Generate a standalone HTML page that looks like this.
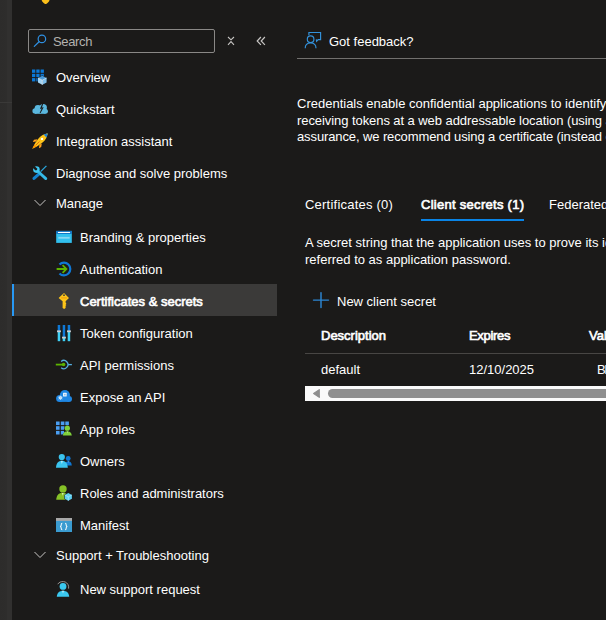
<!DOCTYPE html>
<html><head><meta charset="utf-8">
<style>
html,body{margin:0;padding:0;}
body{width:606px;height:620px;overflow:hidden;position:relative;background:#1b1a19;font-family:"Liberation Sans",sans-serif;font-size:13px;color:#ffffff;}
.a{position:absolute;}
.t{position:absolute;white-space:nowrap;line-height:16px;height:16px;}
.sb{-webkit-text-stroke:0.65px #ffffff;}
.strip{left:0;top:0;width:12px;height:620px;background:linear-gradient(to right,#2d2c2b 0px,#2e2d2c 7px,#31302f 7px,#31302f 12px);}
.sel{left:12px;top:284px;width:265px;height:32px;background:#3b3a39;}
.selb{left:12px;top:284px;width:2px;height:32px;background:#2899f5;}
svg{position:absolute;overflow:visible;}
</style></head><body>
<div class="a strip"></div>
<div class="a" style="left:0;top:102px;width:12px;height:1px;background:#3a3938"></div>

<!-- header key bottom -->
<svg style="left:0;top:0" width="606" height="620" viewBox="0 0 606 620"><path d="M41.8 -3 H49.4 V0.5 C49.4 1.5 46.5 4 45.6 4.1 C44.7 4 41.8 1.5 41.8 0.5 Z" fill="#fbbf1a"/></svg>
<!-- search box -->
<div class="a" style="left:28px;top:29px;width:185px;height:22px;border:1px solid #8a8886;border-radius:2px;"></div>
<svg style="left:0;top:0" width="606" height="620" viewBox="0 0 606 620"><circle cx="41.9" cy="38.9" r="3.75" fill="none" stroke="#2f90e2" stroke-width="1.2"/><line x1="39.1" y1="41.7" x2="34.3" y2="46.4" stroke="#2f90e2" stroke-width="1.25" stroke-linecap="round"/></svg>
<div class="t" style="left:53px;top:34px;color:#b4b2af;letter-spacing:-0.35px">Search</div>
<!-- collapse icon -->
<svg style="left:0;top:0" width="606" height="620" viewBox="0 0 606 620">
<path d="M228 37 L231 39.8 L234 37 M228 44.8 L231 41.6 L234 44.8" fill="none" stroke="#c8c6c4" stroke-width="1.1"/>
<path d="M260.9 37 L257.2 41 L260.9 44.9 M264.9 37 L261.2 41 L264.9 44.9" fill="none" stroke="#c8c6c4" stroke-width="1.2"/>
</svg>
<!-- selected -->
<div class="a sel"></div>
<div class="a selb"></div>

<!-- nav items -->
<div class="t" style="left:56px;top:70px">Overview</div>
<div class="t" style="left:56px;top:102px">Quickstart</div>
<div class="t" style="left:56px;top:134px">Integration assistant</div>
<div class="t" style="left:56px;top:166px">Diagnose and solve problems</div>
<div class="t" style="left:56px;top:196px">Manage</div>
<div class="t" style="left:80px;top:230px">Branding &amp; properties</div>
<div class="t" style="left:80px;top:262px">Authentication</div>
<div class="t sb" style="left:80px;top:294px">Certificates &amp; secrets</div>
<div class="t" style="left:80px;top:326px">Token configuration</div>
<div class="t" style="left:80px;top:358px">API permissions</div>
<div class="t" style="left:80px;top:390px">Expose an API</div>
<div class="t" style="left:80px;top:422px">App roles</div>
<div class="t" style="left:80px;top:454px">Owners</div>
<div class="t" style="left:80px;top:486px">Roles and administrators</div>
<div class="t" style="left:80px;top:518px">Manifest</div>
<div class="t" style="left:56px;top:548px">Support + Troubleshooting</div>
<div class="t" style="left:80px;top:582px">New support request</div>


<!-- Overview -->
<svg style="left:31px;top:69px" width="16" height="16" viewBox="0 0 16 16">
<g fill="#0a78d7"><rect x="1" y="0.5" width="3.3" height="3.3"/><rect x="5.3" y="0.5" width="3.3" height="3.3"/><rect x="9.6" y="0.5" width="3.3" height="3.3"/>
<rect x="1" y="4.8" width="3.3" height="3.3"/><rect x="5.3" y="4.8" width="3.3" height="3.3"/><rect x="9.6" y="4.8" width="3.3" height="3.3"/>
<rect x="1" y="9.1" width="3.3" height="3.3"/><rect x="5.3" y="9.1" width="3.3" height="3.3"/></g>
<path d="M11.3 6.8 L15.6 9 L15.6 13.6 L11.3 15.8 L7 13.6 L7 9 Z" fill="#1b1a19" stroke="#1b1a19" stroke-width="0.8"/>
<path d="M11.3 6.8 L15.6 9 L11.3 11.2 L7 9 Z" fill="#4a9ad8"/>
<path d="M7 9 L11.3 11.2 L11.3 15.8 L7 13.6 Z" fill="#9fd2f3"/>
<path d="M15.6 9 L11.3 11.2 L11.3 15.8 L15.6 13.6 Z" fill="#7cbdea"/>
<path d="M7 9 L11.3 11.2 L15.6 9 M11.3 11.2 V15.8" fill="none" stroke="#e8f4fc" stroke-width="0.7"/>
</svg>
<!-- Quickstart cloud -->
<svg style="left:32px;top:101px" width="16" height="16" viewBox="0 0 16 16">
<g fill="#5ab7de"><circle cx="3.2" cy="10" r="2.8"/><circle cx="6" cy="7.3" r="3.4"/><circle cx="11.2" cy="6.6" r="3.7"/><circle cx="13.4" cy="10.3" r="2.5"/><rect x="3" y="8" width="10.5" height="4.8"/></g>
<path d="M10.6 1.8 L7.9 7.9 L9.7 7.6 L7.6 12 L8.6 12 L11.7 6.3 L9.9 6.6 L11.6 1.8 Z" fill="#1b1a19"/>
</svg>
<!-- Rocket -->
<svg style="left:32px;top:133px" width="16" height="16" viewBox="0 0 16 16">
<path d="M5.5 6.2 L2 6.8 L0.8 9 L4.2 8.6 Z" fill="#ff9f1c"/>
<path d="M9.8 10.5 L9.2 14 L7 15.2 L7.4 11.8 Z" fill="#ff9f1c"/>
<path d="M15.6 0.4 C12 0.8 9 2.5 6.5 5.5 L3.2 10 L2.6 11.2 L0.3 15.7 L4.8 13.4 L6 12.8 L10.5 9.5 C13.5 7 15.2 4 15.6 0.4 Z" fill="#fcc419"/>
<path d="M0.3 15.7 L2.6 11.2 L4.8 13.4 Z" fill="#ff9500"/>
<path d="M4 12 L7.5 8.5" stroke="#e86a10" stroke-width="1"/>
<path d="M15.6 0.4 C14 0.6 12.8 1 11.6 1.6 L14.4 4.4 C15 3.2 15.4 2 15.6 0.4 Z" fill="#1a7fd8"/>
<path d="M15.6 0.4 L14.3 0.8 L15.2 1.7 Z" fill="#9bc48f"/>
<circle cx="10" cy="5.9" r="1.2" fill="#ffffff"/>
</svg>
<!-- Wrench -->
<svg style="left:32px;top:165px" width="16" height="16" viewBox="0 0 16 16">
<path d="M14.4 0.9 L8.6 6.6" stroke="#2aa6dc" stroke-width="1.3"/>
<path d="M7.4 8.6 L2 13.4" stroke="#1382cf" stroke-width="3.1" stroke-linecap="round"/>
<path d="M5.5 6 L13.8 13.6" stroke="#35b9e6" stroke-width="2.8" stroke-linecap="round"/>
<circle cx="4.4" cy="4.6" r="3.3" fill="#3ec8f2"/>
<path d="M1.2 1.4 L3.9 4.1" stroke="#1b1a19" stroke-width="2.6" stroke-linecap="round"/>
</svg>
<!-- Branding -->
<svg style="left:56px;top:230px" width="16" height="14" viewBox="0 0 16 14">
<rect x="0.2" y="0.9" width="15.6" height="12" fill="#32c0ee"/>
<rect x="0.2" y="0.9" width="15.6" height="3" fill="#0f6fc0"/>
<rect x="1.9" y="1.9" width="12.2" height="1.1" fill="#ffffff"/>
<rect x="2.3" y="6.9" width="11.4" height="1.8" fill="#86d8f3"/>
</svg>
<!-- Authentication -->
<svg style="left:56px;top:261px" width="16" height="16" viewBox="0 0 16 16">
<path d="M3.5 3.6 A6.3 6.3 0 1 1 3.5 12.4" fill="none" stroke="#0f78d5" stroke-width="2.2"/>
<path d="M0.6 8 H10.6 M6.6 4.2 L10.4 8 L6.6 11.8" fill="none" stroke="#5cb300" stroke-width="1.8"/>
</svg>
<!-- Key -->
<svg style="left:56px;top:293px" width="16" height="16" viewBox="0 0 16 16">
<path d="M8 0 L13 5 L9.6 8.2 V9.6 L10.4 10.4 L9.6 11.2 L10.4 12 L9.6 12.8 V15 L8.1 16 L6.6 15 V8.2 L2.6 5 Z" fill="#fcc419"/>
<rect x="5" y="4.2" width="6" height="1.4" fill="#f0a010" rx="0.7"/>
<circle cx="8" cy="2.2" r="0.9" fill="#3b3a39"/>
</svg>
<!-- Token configuration -->
<svg style="left:56px;top:325px" width="16" height="16" viewBox="0 0 16 16">
<rect x="1.7" y="0" width="2.5" height="6.2" fill="#0f78d5"/><rect x="1.7" y="6.2" width="2.5" height="10" fill="#3fd0f5"/>
<rect x="6.7" y="0" width="2.5" height="12.5" fill="#0f78d5"/><rect x="6.7" y="12.5" width="2.5" height="3.7" fill="#3fd0f5"/>
<rect x="11.7" y="0" width="2.5" height="6.2" fill="#0f78d5"/><rect x="11.7" y="6.2" width="2.5" height="10" fill="#3fd0f5"/>
<rect x="1" y="5.4" width="3.9" height="1.8" fill="#c9cdd0"/><rect x="6" y="11.7" width="3.9" height="1.8" fill="#c9cdd0"/><rect x="11" y="5.4" width="3.9" height="1.8" fill="#c9cdd0"/>
</svg>
<!-- API permissions -->
<svg style="left:56px;top:357px" width="16" height="16" viewBox="0 0 16 16">
<path d="M5.16 4.46 A4.1 4.1 0 1 1 5.16 10.74" fill="none" stroke="#54aee0" stroke-width="1.3"/>
<path d="M11.90 7.6 H15.9" stroke="#54aee0" stroke-width="1.3"/>
<path d="M-0.2 7.6 H7.5" stroke="#5cb300" stroke-width="1.8"/>
<circle cx="7.6" cy="7.6" r="1.75" fill="#5cb300"/>
</svg>
<!-- Expose an API -->
<svg style="left:56px;top:389px" width="16" height="16" viewBox="0 0 16 16">
<g fill="#1f87e3"><circle cx="3.6" cy="9.5" r="3.5"/><circle cx="8.9" cy="6.1" r="5.1"/><circle cx="13" cy="9.9" r="3"/><rect x="3.6" y="9" width="9.4" height="3.9"/></g>
<rect x="7" y="3.8" width="3.7" height="3.7" fill="#e9f3fb" rx="0.5"/>
<rect x="8.1" y="4.9" width="1.5" height="1.5" fill="#8dbde6"/>
<circle cx="4.4" cy="8.8" r="1.5" fill="#d6ebf8"/>
<path d="M4.4 6.6 V11 M2.2 8.8 H6.6 M2.85 7.25 L5.95 10.35 M5.95 7.25 L2.85 10.35" stroke="#d6ebf8" stroke-width="0.75"/>
<circle cx="4.4" cy="8.8" r="0.5" fill="#9cc8ec"/>
</svg>
<!-- App roles -->
<svg style="left:56px;top:421px" width="16" height="16" viewBox="0 0 16 16">
<g fill="#4a9ef2"><rect x="0" y="0.5" width="3.6" height="3.6"/><rect x="4.8" y="0.5" width="3.6" height="3.6"/><rect x="9.3" y="0.5" width="3.6" height="3.6"/>
<rect x="0" y="5.2" width="3.6" height="3.6"/><rect x="4.8" y="5.2" width="3.6" height="3.6"/>
<rect x="0" y="9.9" width="3.6" height="3.6"/><rect x="4.8" y="9.9" width="3.6" height="3.6"/></g>
<circle cx="11.3" cy="9.2" r="3.3" fill="#1b1a19"/>
<path d="M7 15.3 C7 12.6 8.8 11.2 11.3 11.2 C13.8 11.2 15.6 12.6 15.6 15.3 Z" fill="#1b1a19" stroke="#1b1a19" stroke-width="1"/>
<circle cx="11.3" cy="7.2" r="2.6" fill="#7fd13b"/>
<path d="M6.8 14.5 C7.2 11.5 9 10.3 11.3 10.3 C13.6 10.3 15.4 11.5 15.8 14.5 Z" fill="#7fd13b"/>
<path d="M11 10.5 L11.8 10.5 L11.4 12.3 Z" fill="#e8f5e0"/>
</svg>
<!-- Owners -->
<svg style="left:56px;top:453px" width="16" height="16" viewBox="0 0 16 16">
<circle cx="12.2" cy="5.5" r="2.4" fill="#0f78d5"/>
<path d="M9 12.4 C9.2 9.6 10.4 8.2 12.3 8.2 C14.2 8.2 15.6 9.6 15.8 12.4 Z" fill="#0f78d5"/>
<path d="M11.9 8.3 H12.7 L12.3 10 Z" fill="#9fd0f5"/>
<circle cx="5.8" cy="4.1" r="3.1" fill="#3bc4ee"/>
<path d="M0 14.8 C0.2 10.4 2.4 7.8 5.9 7.8 C9.4 7.8 11.6 10.4 11.8 14.8 Z" fill="#3bc4ee"/>
<path d="M5.2 7.9 H6.6 L5.9 11 Z" fill="#e6f7fd"/>
</svg>
<!-- Roles and administrators -->
<svg style="left:56px;top:485px" width="16" height="16" viewBox="0 0 16 16">
<circle cx="7" cy="3.9" r="3.7" fill="#86c227"/>
<path d="M0.2 14.8 C0.5 10.2 2.8 7.8 6.8 7.8 C10.8 7.8 13 10.2 13.4 14.8 Z" fill="#86c227"/>
<path d="M6.1 7.9 H7.5 L6.8 10.8 Z" fill="#f0f8e6"/>
<path d="M12.3 7.9 L15.9 9.9 L15.9 13.8 L12.3 15.8 L8.7 13.8 L8.7 9.9 Z" fill="#1b1a19" stroke="#1b1a19" stroke-width="0.9"/>
<path d="M12.3 7.9 L15.9 9.9 L15.9 13.8 L12.3 15.8 L8.7 13.8 L8.7 9.9 Z" fill="#5dd0f2"/>
<path d="M8.7 9.9 L12.3 11.8 L15.9 9.9 M12.3 11.8 V15.8" fill="none" stroke="#b7ecfb" stroke-width="0.6"/>
</svg>
<!-- Manifest -->
<svg style="left:56px;top:517px" width="16" height="16" viewBox="0 0 16 16">
<rect x="0" y="1" width="16" height="14" fill="#3a9bd0"/>
<rect x="0" y="1" width="16" height="2.9" fill="#a8a8a8"/>
<path d="M6.3 6.2 C5.2 6.2 5.2 7 5.2 8 C5.2 9 4.8 9.4 4.1 9.5 C4.8 9.6 5.2 10 5.2 11 C5.2 12 5.2 12.8 6.3 12.8 M9.1 6.2 C10.2 6.2 10.2 7 10.2 8 C10.2 9 10.6 9.4 11.3 9.5 C10.6 9.6 10.2 10 10.2 11 C10.2 12 10.2 12.8 9.1 12.8" fill="none" stroke="#f2f8fc" stroke-width="1.1"/>
</svg>
<!-- New support request -->
<svg style="left:56px;top:581px" width="16" height="16" viewBox="0 0 16 16">
<path d="M1.8 3.2 C2.8 1.2 5.2 0.4 7.5 0.6 C10 0.8 12 2.6 12.6 5.2 L12.6 7.6" fill="none" stroke="#a19f9d" stroke-width="0.9"/>
<circle cx="7" cy="5.4" r="3.4" fill="#3bc8ef"/>
<path d="M0.8 15.8 C1 11.8 3.6 9.8 7 9.8 C10.4 9.8 13 11.8 13.2 15.8 Z" fill="#3bc8ef"/>
<path d="M6.2 9.8 H7.8 L7 12.6 Z" fill="#e6f7fd"/>
</svg>

<!-- chevrons -->
<svg style="left:34px;top:199px" width="12" height="8" viewBox="0 0 12 8"><path d="M0.5 1 L6 6.5 L11.5 1" fill="none" stroke="#c8c6c4" stroke-width="1"/></svg>
<svg style="left:34px;top:551px" width="12" height="8" viewBox="0 0 12 8"><path d="M0.5 1 L6 6.5 L11.5 1" fill="none" stroke="#c8c6c4" stroke-width="1"/></svg>

<!-- right panel -->
<svg style="left:0;top:0" width="606" height="620" viewBox="0 0 606 620"><g fill="none" stroke="#3493dc" stroke-width="1.15">
<path d="M308.9 35.2 V32.5 H320.6 V39.6 H318.2 L316.6 41.2 L316.3 39.4"/>
<circle cx="310.6" cy="39.2" r="3.3"/>
<path d="M305.2 48.2 C305.2 44.8 307.6 43 310.6 43 C313.6 43 316 44.8 316 48.2"/></g></svg>
<div class="t" style="left:329px;top:34px">Got feedback?</div>
<div class="a" style="left:297px;top:58px;width:309px;height:1px;background:#72706e"></div>

<div class="t" style="left:297px;top:96px">Credentials enable confidential applications to identify themselves</div>
<div class="t" style="left:297px;top:112.5px;letter-spacing:-0.07px">receiving tokens at a web addressable location (using an HTTPS</div>
<div class="t" style="left:297px;top:129px;letter-spacing:-0.11px">assurance, we recommend using a certificate (instead of a client</div>

<div class="t" style="left:305px;top:197px;letter-spacing:0.22px">Certificates (0)</div>
<div class="t sb" style="left:421px;top:197px;letter-spacing:0.28px">Client secrets (1)</div>
<div class="t" style="left:549px;top:197px">Federated credentials</div>
<div class="a" style="left:421px;top:219px;width:103px;height:2px;background:#0a84e6"></div>

<div class="t" style="left:305px;top:235px">A secret string that the application uses to prove its identity when</div>
<div class="t" style="left:305px;top:252px">referred to as application password.</div>

<svg style="left:0;top:0" width="606" height="620" viewBox="0 0 606 620"><path d="M321 292.6 V307.6 M313.5 300.1 H328.5" stroke="#2c86d4" stroke-width="1.45" stroke-linecap="round"/></svg>
<div class="t" style="left:337px;top:294px">New client secret</div>

<div class="t sb" style="left:321px;top:328px">Description</div>
<div class="t sb" style="left:469px;top:328px;letter-spacing:-0.3px">Expires</div>
<div class="t sb" style="left:589px;top:328px">Value</div>
<div class="a" style="left:305px;top:353px;width:301px;height:1px;background:#484644"></div>
<div class="t" style="left:321px;top:362px">default</div>
<div class="t" style="left:469px;top:362px">12/10/2025</div>
<div class="t" style="left:597px;top:362px">B<span style="margin-left:-1.2px">l</span>G~*****</div>

<!-- scrollbar -->
<div class="a" style="left:305px;top:386px;width:301px;height:15px;background:#fafafa"></div>
<svg style="left:0;top:0" width="606" height="620" viewBox="0 0 606 620"><path d="M319.3 389.6 L319.3 397.4 L313.6 393.5 Z" fill="#8f8f8f" stroke="#8f8f8f" stroke-width="1.1" stroke-linejoin="round"/></svg>
<div class="a" style="left:328px;top:389px;width:300px;height:9px;background:#8f8f8f;border-radius:4.5px"></div>

</body></html>
